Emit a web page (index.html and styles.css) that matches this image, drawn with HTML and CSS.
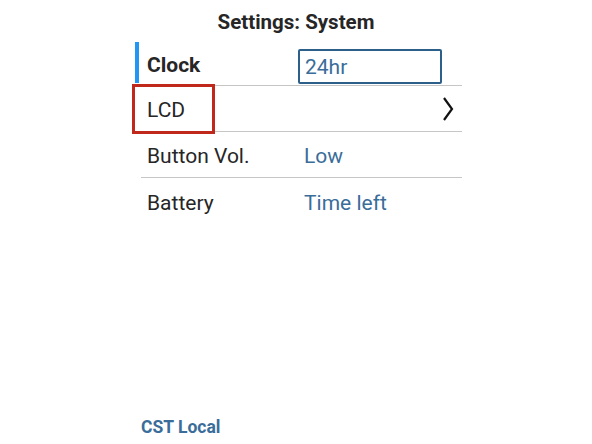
FILE: index.html
```html
<!DOCTYPE html>
<html>
<head>
<meta charset="utf-8">
<link rel="stylesheet" href="styles.css">
</head>
<body>
<div class="screen">
  <h1 class="title">Settings: System</h1>
  <div class="list">
    <div class="row row-active">
      <span class="label bold">Clock</span>
      <span class="input">24hr</span>
    </div>
    <div class="row row-focus">
      <span class="label">LCD</span>
      <svg class="chev" width="12" height="24" viewBox="0 0 12 24"><polyline points="2,1 10,12 2,23" fill="none" stroke="#111" stroke-width="2.2"/></svg>
      <span class="focus-box"></span>
    </div>
    <div class="row">
      <span class="label">Button Vol.</span>
      <span class="value">Low</span>
    </div>
    <div class="row last">
      <span class="label">Battery</span>
      <span class="value">Time left</span>
    </div>
  </div>
  <div class="footer">CST Local</div>
</div>
</body>
</html>
```

FILE: styles.css
```css
* { box-sizing: border-box; }
html, body { margin: 0; padding: 0; background: #fff; }
body { font-family: Roboto, "Noto Sans", "Liberation Sans", sans-serif; color: #262626; }
.screen {
  width: 592px;
  height: 444px;
  display: flex;
  flex-direction: column;
}
.title {
  margin: 0;
  height: 41px;
  display: flex;
  align-items: center;
  justify-content: center;
  font-size: 20.5px;
  font-weight: 700;
  color: #262626;
  padding-top: 2px;
}
.list {
  margin-left: 135px;
  width: 327px;
}
.row {
  position: relative;
  height: 46px;
  display: flex;
  align-items: center;
  padding-left: 6px;
  padding-top: 3px;
  margin-left: 6px;
  border-bottom: 1px solid #c6c6c6;
  font-size: 21px;
}
.row-active {
  margin-left: 0;
  padding-left: 12px;
  border-bottom: none;
  height: 45px;
}
.row-active::before {
  content: "";
  position: absolute;
  left: 0;
  top: 1px;
  height: 41px;
  width: 4px;
  background: #2196f3;
}
.row-active::after {
  content: "";
  position: absolute;
  left: 6px;
  right: 0;
  bottom: 0;
  height: 1px;
  background: #c6c6c6;
}
.row.last { border-bottom: none; }
.label { width: 157px; flex: none; }
.row-active .label { width: 151px; }
.bold { font-weight: 700; }
.input {
  align-self: flex-start;
  margin-top: 5px;
  width: 144px;
  height: 35px;
  border: 2px solid #2d5f8b;
  border-radius: 2px;
  color: #3a6d99;
  display: flex;
  align-items: center;
  padding-left: 5px;
  padding-top: 1px;
}
.value { color: #3a6d99; }
.chev { margin-left: auto; margin-right: 8px; margin-top: -3px; }
.focus-box {
  position: absolute;
  left: -9px;
  top: -2px;
  width: 83px;
  height: 50px;
  border: 3px solid #c0281b;
}
.footer {
  margin-top: auto;
  padding-left: 141px;
  padding-bottom: 7px;
  font-size: 17.5px;
  font-weight: 700;
  color: #3a6d99;
}
```
